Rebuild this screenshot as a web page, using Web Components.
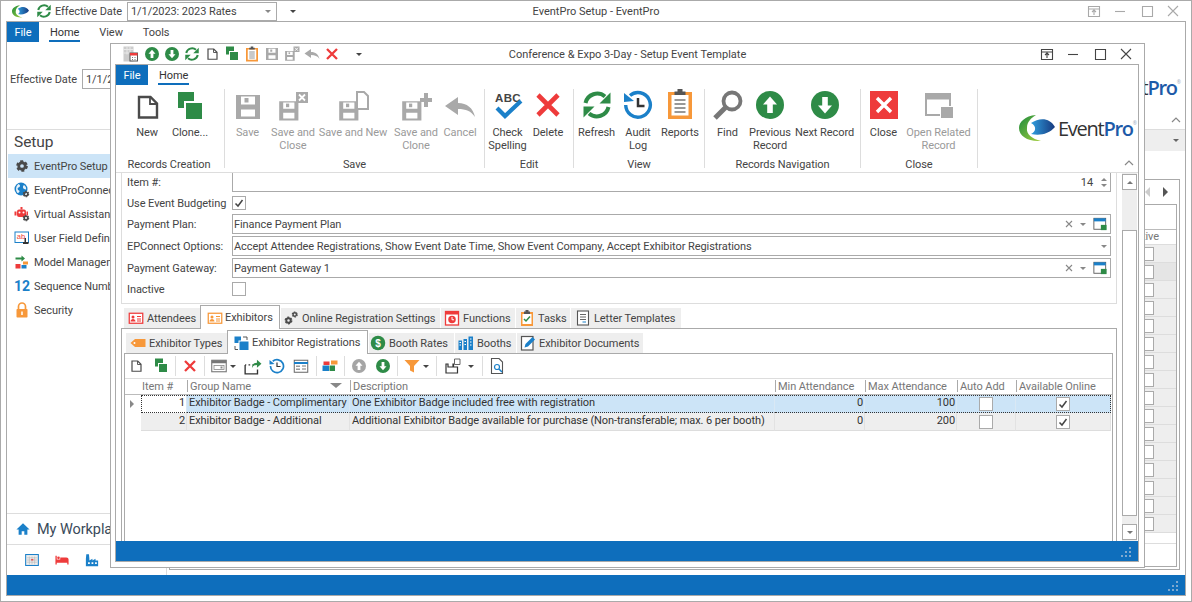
<!DOCTYPE html>
<html>
<head>
<meta charset="utf-8">
<title>EventPro</title>
<style>
  html, body { margin: 0; padding: 0; background: #fff; }
  body { font: 11px/13px Roboto, "Liberation Sans", sans-serif; letter-spacing: -.07px; color: #444; width: 1192px; height: 602px; overflow: hidden; position: relative; }
</style>
</head>
<body>

<ep-window id="main" title="EventPro Setup - EventPro" inactive style="width:1192px;height:602px;--bar:20px">
  <ep-toolbar slot="qat" style="gap:0;padding-left:11px">
    <ep-swirl style="width:17px;height:13px"></ep-swirl>
    <ep-icon name="refresh" size="16" style="margin-left:7px"></ep-icon>
    <span style="margin-left:3px;width:72px">Effective Date</span>
    <ep-combo style="width:150px;height:19px;--arrow:4px">1/1/2023: 2023 Rates</ep-combo>
    <ep-caret style="margin-left:13px"></ep-caret>
  </ep-toolbar>
  <ep-ribbon>
    <ep-ribbon-tab slot="tabs" active style="margin-left:10px">Home</ep-ribbon-tab>
    <ep-ribbon-tab slot="tabs" style="margin-left:18px">View</ep-ribbon-tab>
    <ep-ribbon-tab slot="tabs" style="margin-left:18px">Tools</ep-ribbon-tab>
    <div style="display:flex;align-items:center;height:66px;padding-left:3px;gap:0">
      <span style="width:72px">Effective Date</span>
      <ep-combo style="width:32px;height:20px;--arrow:0">1/1/2023: 2023 Rates</ep-combo>
    </div>
    <ep-logo slot="logo" style="margin:0 4px 1px 0"></ep-logo>
  </ep-ribbon>
  <ep-setup-body></ep-setup-body>
</ep-window>

<ep-window id="dialog" title="Conference &amp; Expo 3-Day - Setup Event Template" style="--pad-l:4px">
  <ep-toolbar slot="qat" style="gap:4px;padding-left:11px">
    <ep-icon name="qat-doc" size="16" style="margin-right:2px"></ep-icon>
    <ep-icon name="up" size="16"></ep-icon>
    <ep-icon name="down" size="16"></ep-icon>
    <ep-icon name="refresh" size="16"></ep-icon>
    <ep-icon name="new" size="16"></ep-icon>
    <ep-icon name="clone" size="16"></ep-icon>
    <ep-icon name="reports" size="16"></ep-icon>
    <ep-icon name="save" size="16"></ep-icon>
    <ep-icon name="save-close" size="16"></ep-icon>
    <ep-icon name="cancel" size="16"></ep-icon>
    <ep-icon name="delete" size="16"></ep-icon>
    <ep-caret style="margin-left:12px"></ep-caret>
  </ep-toolbar>

  <ep-ribbon>
    <ep-ribbon-tab slot="tabs" active style="margin-left:10px">Home</ep-ribbon-tab>

    <ep-ribbon-group label="Records Creation" style="padding:0 12px 0 10px">
      <ep-ribbon-button w="42" icon="new">New</ep-ribbon-button>
      <ep-ribbon-button w="44" icon="clone">Clone...</ep-ribbon-button>
    </ep-ribbon-group>
    <ep-ribbon-group label="Save" style="--pr:6px">
      <ep-ribbon-button w="45" icon="save" disabled>Save</ep-ribbon-button>
      <ep-ribbon-button w="46" icon="save-close" disabled>Save and<br>Close</ep-ribbon-button>
      <ep-ribbon-button w="74" icon="save-new" disabled>Save and New</ep-ribbon-button>
      <ep-ribbon-button w="52" icon="save-clone" disabled>Save and<br>Clone</ep-ribbon-button>
      <ep-ribbon-button w="36" icon="cancel" disabled>Cancel</ep-ribbon-button>
    </ep-ribbon-group>
    <ep-ribbon-group label="Edit" style="--pr:7px">
      <ep-ribbon-button w="45" icon="spell">Check<br>Spelling</ep-ribbon-button>
      <ep-ribbon-button w="36" icon="delete" dy="2">Delete</ep-ribbon-button>
    </ep-ribbon-group>
    <ep-ribbon-group label="View" style="--pr:1px">
      <ep-ribbon-button w="45" icon="refresh" dy="2">Refresh</ep-ribbon-button>
      <ep-ribbon-button w="38" icon="audit" dy="2">Audit<br>Log</ep-ribbon-button>
      <ep-ribbon-button w="46" icon="reports" dy="3">Reports</ep-ribbon-button>
    </ep-ribbon-group>
    <ep-ribbon-group label="Records Navigation" style="--pr:1px">
      <ep-ribbon-button w="45" icon="find" dy="2">Find</ep-ribbon-button>
      <ep-ribbon-button w="40" icon="up" dy="2">Previous<br>Record</ep-ribbon-button>
      <ep-ribbon-button w="69" icon="down" dy="2">Next Record</ep-ribbon-button>
    </ep-ribbon-group>
    <ep-ribbon-group label="Close" style="--pr:6px">
      <ep-ribbon-button w="45" icon="close-box" dy="2">Close</ep-ribbon-button>
      <ep-ribbon-button w="65" icon="related" dy="1">Open Related<br>Record</ep-ribbon-button>
    </ep-ribbon-group>

    <ep-logo slot="logo" style="margin:0 1px 4px 0"></ep-logo>
  </ep-ribbon>

  <ep-template-body></ep-template-body>
</ep-window>

<script>
const G = '#2e8b47', B = '#1b80c9', R = '#ee3b3b', O = '#f7983a', D = '#555', L = '#a9a9a9';

const floppy = (c = L) => `<path fill="${c}" fill-rule="evenodd" d="M4 4h24v24H4z M9 5.5v8h14v-8z M9 18.5v7h14v-7z"/><rect x="12.5" y="7" width="4" height="4.5" fill="${c}"/>`;
const smallFloppy = (c = L) => `<g transform="translate(-1 7) scale(.8)">${floppy(c)}</g>`;
const cardIcon = c => `<rect x="2.5" y="6.5" width="27" height="20" fill="#fff" stroke="${c}" stroke-width="2.5"/><circle cx="10" cy="14" r="3" fill="${c}"/><path d="M5 23c0-7 10-7 10 0z" fill="${c}"/><path d="M18 13h8M18 18h8M18 22h8" stroke="${c}" stroke-width="2"/>`;
const gearPath = (cx, cy, r, c) => `<circle cx="${cx}" cy="${cy}" r="${r}" fill="none" stroke="${c}" stroke-width="${r * .85}"/><circle cx="${cx}" cy="${cy}" r="${r * 1.5}" fill="none" stroke="${c}" stroke-width="${r * .6}" stroke-dasharray="${r * .9} ${r * .68}"/>`;

const ICONS = {
  new: `<path d="M8 6h11.5l6.5 6.5V26.5H8z" fill="#fff" stroke="#4a4a4a" stroke-width="2.4"/><path d="M19 6v7h7" fill="none" stroke="#4a4a4a" stroke-width="1.8"/>`,
  clone: `<rect x="4" y="1" width="16" height="16" fill="${G}"/><rect x="10" y="10" width="20" height="20" fill="#fff"/><rect x="12" y="12" width="16" height="16" fill="${G}"/>`,
  save: floppy(),
  'save-close': `${smallFloppy()}<rect x="19" y="1" width="12" height="11" fill="${L}"/><path d="M22 3.5l6 6M28 3.5l-6 6" stroke="#fff" stroke-width="1.8"/>`,
  'save-new': `${smallFloppy()}<path d="M20 1h7l4 4v13H20z" fill="#fff" stroke="${L}" stroke-width="2"/>`,
  'save-clone': `${smallFloppy()}<path d="M20 7h4V2h4v5h4v4h-4v5h-4v-5h-4z" fill="${L}"/>`,
  cancel: `<path fill="${L}" d="M1 15L14 6v6c9 0 15 5 17 14-4-6-9-8-17-8v6z"/>`,
  spell: `<text x="16" y="11" text-anchor="middle" font-family="Liberation Sans, sans-serif" font-weight="700" font-size="11.5" letter-spacing=".3" fill="#444">ABC</text><path d="M5 17l8 8L29 10" fill="none" stroke="${B}" stroke-width="4.2"/>`,
  delete: `<path d="M6 6l20 20M26 6L6 26" stroke="${R}" stroke-width="4.6"/>`,
  refresh: `<path d="M4.5 14A12 12 0 0 1 24 7.5" fill="none" stroke="${G}" stroke-width="4"/><path d="M29.5 3.5v11h-11z" fill="${G}"/><path d="M27.5 18A12 12 0 0 1 8 24.5" fill="none" stroke="${G}" stroke-width="4"/><path d="M2.5 28.5v-11h11z" fill="${G}"/>`,
  audit: `<path d="M8 6.5A12.3 12.3 0 1 1 3.7 16" fill="none" stroke="${B}" stroke-width="3.4"/><path d="M2 4l0 9 10-1z" fill="${B}"/><path d="M16 9v8h6.5" fill="none" stroke="#333" stroke-width="2.5"/>`,
  reports: `<rect x="4" y="4" width="24" height="27" fill="${O}"/><rect x="7.5" y="7" width="17" height="20.5" fill="#fff"/><path d="M10.5 7V3.5h3V1h5v2.5h3V7z" fill="#555"/><path d="M10.5 12h11M10.5 16h11M10.5 20h11M10.5 24h11" stroke="#777" stroke-width="1.6"/>`,
  tasks: `<rect x="4" y="4" width="24" height="28" fill="${O}"/><rect x="7" y="8" width="18" height="20" fill="#fff"/><path d="M10 8V3h3V0h6v3h3v5z" fill="#555"/><path d="M10 18l4 4 8-9" fill="none" stroke="${G}" stroke-width="3"/>`,
  find: `<circle cx="20" cy="12" r="8.5" fill="#fff" stroke="#777" stroke-width="3.8"/><path d="M14 18L3 29" stroke="#777" stroke-width="5"/>`,
  up: `<circle cx="16" cy="16" r="14" fill="${G}"/><path d="M16 7.5l7 8h-4.2v8.5h-5.6v-8.5H9z" fill="#fff"/>`,
  down: `<circle cx="16" cy="16" r="14" fill="${G}"/><path d="M16 24.5l7-8h-4.2V8h-5.6v8.5H9z" fill="#fff"/>`,
  'up-gray': `<circle cx="16" cy="16" r="14" fill="#a5a5a5"/><path d="M16 7.5l7 8h-4.2v8.5h-5.6v-8.5H9z" fill="#fff"/>`,
  'close-box': `<rect x="2" y="2" width="28" height="28" fill="${R}"/><path d="M9 9l14 14M23 9L9 23" stroke="#fff" stroke-width="3.4"/>`,
  related: `<path d="M2 3h26v6.5H2z" fill="${L}"/><path d="M3 9v16h14" fill="none" stroke="${L}" stroke-width="2"/><path d="M27 9v7" stroke="${L}" stroke-width="2"/><rect x="18" y="17" width="12" height="11" fill="${L}"/>`,
  gear: gearPath(16, 16, 6.5, '#4a4a4a'),
  gears: `${gearPath(11, 21, 4.4, '#4a4a4a')}${gearPath(23.5, 9, 3.4, '#4a4a4a')}`,
  globe: `<circle cx="14" cy="14" r="13" fill="${B}"/><path d="M9 4c5 2 3 6 0 7s-2 5 1 6-1 6-3 5C3 18 3 8 9 4z M20 6c3 2 5 6 4 9-3 0-7-2-6-5 0-2 1-3 2-4z" fill="#fff" opacity=".9"/>${gearPath(24, 24, 3.6, '#4a4a4a')}`,
  robot: `<rect x="6" y="7" width="18" height="15" rx="4" fill="${R}"/><rect x="1" y="11" width="4" height="8" fill="${R}"/><rect x="25" y="11" width="3" height="8" fill="${R}"/><rect x="13" y="2" width="4" height="5" fill="${R}"/><circle cx="11" cy="13" r="2" fill="#fff"/><circle cx="19" cy="13" r="2" fill="#fff"/>${gearPath(24, 24, 3.6, '#4a4a4a')}`,
  field: `<rect x="2" y="4" width="27" height="21" fill="#fff" stroke="${B}" stroke-width="2"/><text x="14" y="18" text-anchor="middle" font-family="Liberation Sans, sans-serif" font-size="15" fill="${R}">ab</text><path d="M21 16h3v8h5v4H18v-4h3z" fill="#333"/>`,
  model: `<path d="M3 7h12v-4l7 6-7 6v-4H3z" fill="${G}"/><rect x="3" y="20" width="10" height="9" fill="${R}"/><rect x="15" y="22" width="10" height="7" fill="${B}"/><rect x="18" y="15" width="10" height="6" fill="${O}"/>`,
  seq: `<text x="16" y="26" text-anchor="middle" font-family="Roboto, sans-serif" font-weight="700" font-size="28" fill="${B}">12</text>`,
  lock: `<path d="M9 15V9a7 7 0 0 1 14 0v6" fill="none" stroke="${O}" stroke-width="3.4"/><rect x="5" y="14" width="22" height="17" rx="1.5" fill="${O}"/><rect x="14.5" y="19" width="3" height="7" fill="#fff"/>`,
  home: `<path d="M16 3L1 17h5v12h7v-8h6v8h7V17h5z" fill="${B}"/>`,
  calendar: `<rect x="1.5" y="3.5" width="29" height="25" fill="#eee" stroke="${B}" stroke-width="2.4"/><path d="M4 11h24M4 16h24M4 21h24M10 8v18M16 8v18M22 8v18" stroke="#bbb" stroke-width="1.5"/><rect x="14" y="14" width="5" height="3" fill="${R}"/>`,
  bed: `<path d="M1 6h3v9h8V10h14a5 5 0 0 1 5 5v11h-3v-4H4v4H1z" fill="${R}"/><circle cx="8" cy="11" r="3" fill="${R}"/>`,
  factory: `<path d="M2 30V13l1-10h6l1 10v4l7-4v4l7-4v4h6v13z" fill="${B}"/><path d="M7 21h4v4H7zM15 21h4v4h-4zM23 21h4v4h-4z" fill="#fff"/>`,
  'card-red': cardIcon(R),
  'card-orange': cardIcon(O),
  clock: `<rect x="3" y="3" width="26" height="27" fill="#fff" stroke="${R}" stroke-width="2.6"/><rect x="3" y="3" width="26" height="6" fill="${R}"/><circle cx="16" cy="19" r="7.5" fill="${R}"/><path d="M16 14v5.5h4" fill="none" stroke="#fff" stroke-width="2"/>`,
  letter: `<rect x="5" y="2" width="22" height="28" fill="#fff" stroke="#555" stroke-width="2.2"/><path d="M10 9h12M10 14h12M10 19h12" stroke="#555" stroke-width="1.8"/><path d="M15 24h7" stroke="${B}" stroke-width="2"/>`,
  tag: `<path d="M1 16l9-8h21v16H10z" fill="${O}"/><circle cx="9" cy="16" r="2" fill="#fff"/>`,
  registrations: `<rect x="1" y="3" width="13" height="13" fill="${B}"/><rect x="9" y="11" width="20" height="19" fill="#fff"/><rect x="11" y="13" width="18" height="17" fill="${B}"/><path d="M18 4h8v6M2 22v7h6" fill="none" stroke="#444" stroke-width="1.8"/>`,
  dollar: `<circle cx="16" cy="16" r="14.5" fill="${G}"/><text x="16" y="23" text-anchor="middle" font-family="Liberation Sans, sans-serif" font-weight="700" font-size="20" fill="#fff">$</text>`,
  booths: `<path d="M1 11h7v19H1zM11 8h7v22h-7zM21 3h9v27h-9z" fill="${B}"/><path d="M3 15h3M3 20h3M13 13h3M13 19h3M24 8h3M24 14h3M24 20h3" stroke="#fff" stroke-width="2"/>`,
  docedit: `<rect x="3" y="3" width="23" height="27" fill="#fff" stroke="#555" stroke-width="2.4"/><path d="M9 25l2-7L25 4l5 5-14 14z" fill="${B}"/>`,
  layout: `<rect x="1.5" y="4.5" width="29" height="23" fill="#fff" stroke="#777" stroke-width="2.2"/><rect x="1.5" y="4.5" width="29" height="6" fill="#777"/><rect x="6" y="15" width="20" height="8" fill="none" stroke="#888" stroke-width="1.6"/><rect x="19" y="17" width="4" height="4" fill="#888"/>`,
  export: `<path d="M2 14h2M8 14h3M15 14h2M2 14v16h22V22" fill="none" stroke="#333" stroke-width="2.4"/><path d="M14 20c0-7 4-10 9-10V5l8 7-8 7v-5c-4 0-7 1-9 6z" fill="${G}"/>`,
  history: `<path d="M7.5 6.5A13 13 0 1 1 3 16" fill="none" stroke="${B}" stroke-width="3.4"/><path d="M1 4v9l10-1z" fill="${B}"/><path d="M16 9v8h7" fill="none" stroke="#333" stroke-width="2.4"/>`,
  form: `<rect x="2.5" y="4.5" width="27" height="24" fill="#fff" stroke="#666" stroke-width="2"/><path d="M2 10h28" stroke="${B}" stroke-width="4"/><rect x="6" y="15" width="8" height="3" fill="#999"/><rect x="6" y="21" width="8" height="3" fill="#999"/><path d="M18 16h8M18 22h8" stroke="#777" stroke-width="2"/>`,
  colors: `<rect x="1" y="15" width="13" height="11" fill="${B}"/><rect x="15" y="15" width="11" height="11" fill="${G}"/><rect x="3" y="7" width="12" height="7" fill="${R}"/><rect x="18" y="5" width="13" height="8" fill="${O}"/>`,
  funnel: `<path d="M1 4h30L20 16v13l-8-4V16z" fill="${O}"/>`,
  columns: `<path d="M2 12h4v6h10V12h1v6h8v12H2z" fill="#fff" stroke="#333" stroke-width="2.4"/><path d="M19 2h11v11H19z" fill="#fff" stroke="#555" stroke-width="1.8"/>`,
  preview: `<path d="M5 1h15l7 7v23H5z" fill="#fff" stroke="#555" stroke-width="2.2"/><circle cx="16" cy="18" r="5" fill="#fff" stroke="${B}" stroke-width="2.4"/><path d="M20 22l6 6" stroke="${B}" stroke-width="3"/>`,
  'qat-doc': `<rect x="3" y="1" width="20" height="30" fill="#ccc"/><path d="M3 7h20M3 14h20M10 1v16M16 1v16" stroke="#e8e8e8" stroke-width="2"/><rect x="16" y="14" width="15" height="16" fill="#fff" stroke="#555" stroke-width="2"/><rect x="16" y="14" width="15" height="5" fill="${R}"/><path d="M20 23h2M25 23h2M20 27h2M25 27h2" stroke="#555" stroke-width="1.6"/>`,
  lookup: `<rect x="2" y="3" width="27" height="25" fill="#fff" stroke="#555" stroke-width="2"/><rect x="2" y="3" width="27" height="7" fill="${B}"/><rect x="18" y="18" width="13" height="12" fill="${G}"/>`,
};

class EpIcon extends HTMLElement {
  constructor() {
    super();
    this.attachShadow({mode: 'open'});
  }
  connectedCallback() {
    const s = this.getAttribute('size') || 32;
    this.shadowRoot.innerHTML = `
    <style>
      :host { display: inline-flex; flex: none; width: ${s}px; height: ${s}px; }
      svg { display: block; width: 100%; height: 100%; }
    </style>
    <svg viewBox="0 0 32 32">${ICONS[this.getAttribute('name')] || ''}</svg>`;
  }
}

class EpCaret extends HTMLElement {
  constructor() {
    super();
    this.attachShadow({mode: 'open'});
    this.shadowRoot.innerHTML = `
    <style>
      :host { display: inline-block; flex: none; width: 0; height: 0; border: 3px solid transparent; border-top: 3px solid var(--caret, #444); border-bottom: 0; }
    </style>`;
  }
}

class EpSep extends HTMLElement {
  constructor() {
    super();
    this.attachShadow({mode: 'open'});
    this.shadowRoot.innerHTML = `<style>:host { display: block; flex: none; width: 1px; height: 20px; background: #ddd; }</style>`;
  }
}

class EpToolbar extends HTMLElement {
  constructor() {
    super();
    this.attachShadow({mode: 'open'});
    this.shadowRoot.innerHTML = `
    <style>:host { display: flex; align-items: center; height: 100%; }</style>
    <slot></slot>`;
  }
}

class EpSwirl extends HTMLElement {
  constructor() {
    super();
    this.attachShadow({mode: 'open'});
    this.shadowRoot.innerHTML = `
    <style>:host { display: block; flex: none; } svg { display: block; width: 100%; height: 100%; }</style>
    <svg viewBox="0 0 36 27">
      <defs>
        <linearGradient id="g" x1="0" x2="1" y1="0" y2="1"><stop offset="0" stop-color="#1b8a3d"/><stop offset="1" stop-color="#a4cf3c"/></linearGradient>
        <linearGradient id="b" x1="0" x2="1"><stop offset="0" stop-color="#2f9ede"/><stop offset="1" stop-color="#17397f"/></linearGradient>
      </defs>
      <path fill="url(#g)" d="M17 0C6 1 0 7 0 13c0 8 9 14 22 13-9-2-15-7-14-13C8 7 12 3 17 0z"/>
      <path fill="url(#b)" d="M12 8c9-6 19-5 24 4-6 7-15 9-24 7 5-2 6-8 0-11z"/>
    </svg>`;
  }
}

class EpLogo extends HTMLElement {
  constructor() {
    super();
    this.attachShadow({mode: 'open'});
    this.shadowRoot.innerHTML = `
    <style>
      :host { display: flex; align-items: center; gap: 3px; flex: none; }
      ep-swirl { width: 36px; height: 27px; }
      span { font: 20px/27px "Open Sans", sans-serif; letter-spacing: -1.25px; color: #333; }
      b { font-weight: 600; color: #1d5aa8; }
      sup { font-size: 5px; line-height: 0; vertical-align: 11px; color: #9ab; letter-spacing: 0; }
    </style>
    <ep-swirl></ep-swirl><span>Event<b>Pro</b><sup>®</sup></span>`;
  }
}

class EpWindow extends HTMLElement {
  constructor() {
    super();
    this.attachShadow({mode: 'open'});
  }
  connectedCallback() {
    const fg = this.hasAttribute('inactive') ? '#a9a9a9' : '#444';
    this.shadowRoot.innerHTML = `
    <style>
      :host { display: flex; flex-direction: column; box-sizing: border-box; border: 1px solid #aaa; background: #fff; padding: 0 5px 5px var(--pad-l, 5px); }
      .bar { display: grid; grid-template-columns: 1fr auto 1fr; align-items: center; flex: none; height: var(--bar, 20px); margin: 0 -5px 0 calc(var(--pad-l, 5px) * -1); }
      .title { color: #444; letter-spacing: 0; }
      .ctl { display: flex; justify-content: flex-end; align-items: center; gap: 12.3px; padding-right: 11px; }
      .ctl svg { display: block; width: 14px; height: 14px; fill: none; stroke: ${fg}; stroke-width: 1.1; }
      .frame { flex: 1; min-height: 0; display: flex; flex-direction: column; border: 1px solid #aaa; overflow: hidden; }
    </style>
    <div class="bar">
      <div><slot name="qat"></slot></div>
      <div class="title">${this.getAttribute('title')}</div>
      <div class="ctl">
        <svg viewBox="0 0 14 14"><path d="M1.5 2.5h11v10h-11zM1.5 5h11M7 11V6.5M5 8l2-2 2 2"/></svg>
        <svg viewBox="0 0 14 14"><path d="M2 7.5h10"/></svg>
        <svg viewBox="0 0 14 14"><path d="M2.5 2.5h10v10h-10z"/></svg>
        <svg viewBox="0 0 14 14"><path d="M2 2l10 10M12 2L2 12"/></svg>
      </div>
    </div>
    <div class="frame"><slot></slot></div>`;
  }
}

class EpRibbon extends HTMLElement {
  constructor() {
    super();
    this.attachShadow({mode: 'open'});
    this.shadowRoot.innerHTML = `
    <style>
      :host { display: block; flex: none; position: relative; border-bottom: 1px solid #ddd; }
      .tabs { display: flex; height: 21px; }
      .file { width: 32px; height: 20px; background: #0e6ebc; color: #fff; text-align: center; line-height: 22px; }
      .body { display: flex; align-items: flex-start; height: 86px; box-sizing: border-box; padding-top: 3px; }
      .groups { display: flex; flex: 1; min-width: 0; }
      .logo { align-self: center; display: flex; }
      .chev { position: absolute; right: 4px; bottom: 6px; width: 10px; height: 6px; fill: none; stroke: #888; stroke-width: 1.2; }
    </style>
    <div class="tabs"><div class="file">File</div><slot name="tabs"></slot></div>
    <div class="body">
      <div class="groups"><slot></slot></div>
      <div class="logo"><slot name="logo"></slot></div>
    </div>
    <svg class="chev" viewBox="0 0 10 6"><path d="M1 5l4-4 4 4"/></svg>`;
  }
}

class EpRibbonTab extends HTMLElement {
  constructor() {
    super();
    this.attachShadow({mode: 'open'});
    this.shadowRoot.innerHTML = `
    <style>
      :host { display: block; height: 20px; box-sizing: border-box; line-height: 21px; padding: 0 1px; }
      :host([active]) { border-bottom: 2px solid #0e6ebc; color: #333; }
    </style>
    <slot></slot>`;
  }
}

class EpRibbonGroup extends HTMLElement {
  constructor() {
    super();
    this.attachShadow({mode: 'open'});
  }
  connectedCallback() {
    this.shadowRoot.innerHTML = `
    <style>
      :host { display: flex; flex-direction: column; flex: none; height: 79px; box-sizing: content-box; border-right: 1px solid #ddd; }
      .btns { display: flex; flex: 1; padding-right: var(--pr, 0); }
      .label { text-align: center; height: 10px; line-height: 13px; }
    </style>
    <div class="btns"><slot></slot></div>
    <div class="label">${this.getAttribute('label')}</div>`;
  }
}

class EpRibbonButton extends HTMLElement {
  constructor() {
    super();
    this.attachShadow({mode: 'open'});
  }
  connectedCallback() {
    const dy = +this.getAttribute('dy') || 0;
    const dim = this.getAttribute('icon') === 'related' || this.hasAttribute('disabled');
    this.shadowRoot.innerHTML = `
    <style>
      :host { display: flex; flex-direction: column; align-items: center; flex: none; width: ${this.getAttribute('w')}px; text-align: center; white-space: nowrap; padding-top: 2px; ${dim ? 'color: #9a9a9a;' : ''} }
      ep-icon { margin-top: ${-dy}px; margin-bottom: ${3 + dy}px; }
    </style>
    <ep-icon name="${this.getAttribute('icon')}" size="32"></ep-icon>
    <div><slot></slot></div>`;
  }
}

class EpCombo extends HTMLElement {
  constructor() {
    super();
    this.attachShadow({mode: 'open'});
    this.shadowRoot.innerHTML = `
    <style>
      :host { display: flex; align-items: center; flex: none; box-sizing: border-box; border: 1px solid #aaa; padding: 0 1px 0 1px; background: #fff; color: #444; overflow: hidden; white-space: nowrap; }
      .txt { flex: 1; padding-left: 2px; }
      .tools { display: flex; align-items: center; gap: 5px; padding-right: var(--arrow, 4px); --caret: #888; }
    </style>
    <div class="txt"><slot></slot></div>
    <div class="tools"><slot name="tools"></slot><ep-caret></ep-caret></div>`;
  }
}

class EpCheck extends HTMLElement {
  constructor() {
    super();
    this.attachShadow({mode: 'open'});
    this.shadowRoot.innerHTML = `
    <style>
      :host { display: block; flex: none; box-sizing: border-box; width: 14px; height: 14px; border: 1px solid #aaa; background: #fff; }
      svg { display: none; width: 12px; height: 12px; fill: none; stroke: #444; stroke-width: 1.5; }
      :host([checked]) svg { display: block; }
    </style>
    <svg viewBox="0 0 12 12"><path d="M2.5 6.5l2.5 2.5 4.5-6"/></svg>`;
  }
}

class EpFormRow extends HTMLElement {
  constructor() {
    super();
    this.attachShadow({mode: 'open'});
  }
  connectedCallback() {
    this.shadowRoot.innerHTML = `
    <style>
      :host { display: grid; grid-template-columns: 110px 1fr; align-items: center; box-sizing: border-box; padding: 0 5px var(--pb, 0) 0; height: var(--h, 22px); }
      .lbl { padding-left: 5px; white-space: nowrap; }
      .val { display: flex; align-items: center; }
    </style>
    <div class="lbl">${this.getAttribute('label')}</div>
    <div class="val"><slot></slot></div>`;
  }
}

class EpTabs extends HTMLElement {
  constructor() {
    super();
    this.attachShadow({mode: 'open'});
    this.shadowRoot.innerHTML = `
    <style>
      :host { display: flex; flex-direction: column; flex: 1; min-height: 0; }
      .strip { display: flex; align-items: flex-end; gap: 1px; height: 22px; flex: none; padding-left: var(--strip-pad, 3px); position: relative; z-index: 1; }
      .frame { flex: 1; min-height: 0; display: flex; flex-direction: column; border: 1px solid #aaa; border-bottom: 0; padding: var(--frame-pad, 0); }
    </style>
    <div class="strip"><slot name="tab"></slot></div>
    <div class="frame"><slot></slot></div>`;
  }
}

class EpTab extends HTMLElement {
  constructor() {
    super();
    this.attachShadow({mode: 'open'});
  }
  connectedCallback() {
    this.shadowRoot.innerHTML = `
    <style>
      :host { display: flex; align-items: center; gap: 3px; flex: none; box-sizing: border-box; width: ${this.getAttribute('w')}px; height: 20px; padding-left: 4px; background: #eee; white-space: nowrap; }
      :host([active]) { height: 24px; margin-bottom: -1px; background: #fff; border: 1px solid #aaa; border-bottom: 0; padding-left: 6px; margin-left: -1px; gap: 2px; }
    </style>
    <ep-icon name="${this.getAttribute('icon')}" size="16"></ep-icon>
    <div><slot></slot></div>`;
  }
}

class EpScrollbar extends HTMLElement {
  constructor() {
    super();
    this.attachShadow({mode: 'open'});
    this.shadowRoot.innerHTML = `
    <style>
      :host { display: flex; flex-direction: column; flex: none; width: 15px; margin-right: 1px; background: #eee; padding-top: 1px; padding-bottom: 1px; box-sizing: border-box; --caret: #777; }
      .b { flex: none; height: 16px; box-sizing: border-box; border: 1px solid #aaa; background: #fff; display: flex; align-items: center; justify-content: center; }
      .up ep-caret { transform: rotate(180deg); }
      .thumb { flex: 1; box-sizing: border-box; border: 1px solid #aaa; background: #fff; margin: 40px 0 8px; }
    </style>
    <div class="b up"><ep-caret></ep-caret></div>
    <div class="thumb"></div>
    <div class="b"><ep-caret></ep-caret></div>`;
  }
}

class EpStatusBar extends HTMLElement {
  constructor() {
    super();
    this.attachShadow({mode: 'open'});
    this.shadowRoot.innerHTML = `
    <style>
      :host { display: flex; justify-content: flex-end; align-items: flex-end; flex: none; height: 20px; background: #0e6ebc; padding: 0 6px 3px 0; box-sizing: border-box; }
      svg { display: block; width: 11px; height: 11px; fill: #7fa9d0; }
    </style>
    <svg viewBox="0 0 11 11"><path d="M8 0h2v2H8zM4 4h2v2H4zM8 4h2v2H8zM0 8h2v2H0zM4 8h2v2H4zM8 8h2v2H8z"/></svg>`;
  }
}

class EpGrid extends HTMLElement {
  constructor() {
    super();
    this.attachShadow({mode: 'open'});
    const cols = ['Item #', 'Group Name', 'Description', 'Min Attendance', 'Max Attendance', 'Auto Add', 'Available Online'];
    const rows = [
      ['1', 'Exhibitor Badge - Complimentary', 'One Exhibitor Badge included free with registration', '0', '100', false, true],
      ['2', 'Exhibitor Badge - Additional', 'Additional Exhibitor Badge available for purchase (Non-transferable; max. 6 per booth)', '0', '200', false, true],
    ];
    const tpl = '16px 46px 163px 425px 90px 92px 59px 95px';
    const rowHtml = (r, i) => `
      <div class="row ${i === 0 ? 'sel' : ''}">
        <div class="ind">${i === 0 ? '<i></i>' : ''}</div>
        <div class="c num first">${r[0]}</div>
        <div class="c">${r[1]}</div>
        <div class="c">${r[2]}</div>
        <div class="c num">${r[3]}</div>
        <div class="c num">${r[4]}</div>
        <div class="c chk"><ep-check ${r[5] ? 'checked' : ''}></ep-check></div>
        <div class="c chk"><ep-check ${r[6] ? 'checked' : ''}></ep-check></div>
      </div>`;
    this.shadowRoot.innerHTML = `
    <style>
      :host { display: block; flex: 1; white-space: nowrap; color: #333; }
      .head, .row { display: grid; grid-template-columns: ${tpl}; }
      .head { height: 15px; border-bottom: 1px solid #bbb; color: #777; box-sizing: content-box; }
      .head div { padding-left: 2px; border-left: 1px solid #aaa; position: relative; height: 12px; line-height: 14px; margin-top: 1px; }
      .head div:first-child { border-left: 0; }
      .head div:nth-child(2) { border-left: 0; padding-left: 1px; }
      .sort { position: absolute; right: 11px; top: 4px; --caret: #888; transform: scale(2, 1.7); }
      .row { height: 18px; line-height: 16px; }
      .c { padding: 0 1px 0 2px; background: #eee; border-right: 1px solid #e2e2e2; border-bottom: 1px solid #ddd; overflow: hidden; }
      .ind { position: relative; }
      .ind i { position: absolute; left: 5px; top: 5px; width: 0; height: 0; border: 4px solid transparent; border-left: 4px solid #888; border-right: 0; }
      .num { text-align: right; }
      .chk { display: flex; justify-content: center; align-items: center; padding: 0; }
      .sel .c { background: #cce4f7; border-top: 1px dotted #333; border-bottom: 1px dotted #333; border-right-color: #d9e8f4; line-height: 14px; }
      .sel .c:last-child { border-right: 1px dotted #333; }
      .sel .first { background: #fff; border-left: 1px dotted #333; }
    </style>
    <div class="head">
      <div></div>
      ${cols.map((c, i) => `<div>${c}${i === 1 ? '<ep-caret class="sort"></ep-caret>' : ''}</div>`).join('')}
    </div>
    ${rows.map(rowHtml).join('')}`;
  }
}

class EpTemplateBody extends HTMLElement {
  constructor() {
    super();
    this.attachShadow({mode: 'open'});
    this.shadowRoot.innerHTML = `
    <style>
      :host { display: flex; flex: 1; min-height: 0; flex-direction: column; }
      .main { display: flex; flex: 1; min-height: 0; }
      .col { flex: 1; min-width: 0; display: flex; flex-direction: column; padding: 0 5px; }
      .form { flex: none; border: 1px solid #ddd; border-top: 0; padding-bottom: 5px; margin-bottom: 2px; }
      .box { flex: 1; height: 20px; box-sizing: border-box; border: 1px solid #aaa; display: flex; align-items: center; padding: 0 3px 0 1px; white-space: nowrap; color: #444; }
      .box .t { flex: 1; }
      .item { height: 19px; border-top: 0; justify-content: flex-end; padding-right: 3px; }
      .spin { display: flex; flex-direction: column; gap: 3px; margin-left: 8px; --caret: #888; }
      .spin ep-caret:first-child { transform: rotate(180deg); }
      .tool { display: flex; align-items: center; gap: 7px; --caret: #888; }
      .sub { flex: 1; min-height: 0; display: flex; --strip-pad: 2px; margin-top: 2px; margin-right: 3px; margin-left: 2px; }
    </style>
    <div class="main">
      <div class="col">
        <div class="form">
          <ep-form-row label="Item #:" style="--h:19px"><div class="box item">14<span class="spin"><ep-caret></ep-caret><ep-caret></ep-caret></span></div></ep-form-row>
          <ep-form-row label="Use Event Budgeting"><ep-check checked></ep-check></ep-form-row>
          <ep-form-row label="Payment Plan:" style="--pb:2px"><div class="box"><span class="t">Finance Payment Plan</span><span class="tool">
            <svg width="8" height="8" viewBox="0 0 8 8"><path d="M1 1l6 6M7 1L1 7" stroke="#888" stroke-width="1.1"/></svg><ep-caret></ep-caret><ep-icon name="lookup" size="14"></ep-icon></span></div></ep-form-row>
          <ep-form-row label="EPConnect Options:" style="--pb:2px"><div class="box"><span class="t">Accept Attendee Registrations, Show Event Date Time, Show Event Company, Accept Exhibitor Registrations</span><ep-caret style="--caret:#888"></ep-caret></div></ep-form-row>
          <ep-form-row label="Payment Gateway:" style="--pb:2px"><div class="box"><span class="t">Payment Gateway 1</span><span class="tool">
            <svg width="8" height="8" viewBox="0 0 8 8"><path d="M1 1l6 6M7 1L1 7" stroke="#888" stroke-width="1.1"/></svg><ep-caret></ep-caret><ep-icon name="lookup" size="14"></ep-icon></span></div></ep-form-row>
          <ep-form-row label="Inactive" style="--h:18px"><ep-check></ep-check></ep-form-row>
        </div>

        <ep-tabs>
          <ep-tab slot="tab" w="76" icon="card-red">Attendees</ep-tab>
          <ep-tab slot="tab" w="80" icon="card-orange" active>Exhibitors</ep-tab>
          <ep-tab slot="tab" w="159" icon="gears" style="padding-left:2px">Online Registration Settings</ep-tab>
          <ep-tab slot="tab" w="74" icon="clock" style="padding-left:3px">Functions</ep-tab>
          <ep-tab slot="tab" w="54" icon="tasks" style="padding-left:3px">Tasks</ep-tab>
          <ep-tab slot="tab" w="110" icon="letter">Letter Templates</ep-tab>
          <div class="sub">
            <ep-tabs>
              <ep-tab slot="tab" w="101" icon="tag">Exhibitor Types</ep-tab>
              <ep-tab slot="tab" w="141" icon="registrations" active>Exhibitor Registrations</ep-tab>
              <ep-tab slot="tab" w="85" icon="dollar" style="padding-left:1px">Booth Rates</ep-tab>
              <ep-tab slot="tab" w="61" icon="booths" style="padding-left:3px">Booths</ep-tab>
              <ep-tab slot="tab" w="126" icon="docedit" style="padding-left:3px">Exhibitor Documents</ep-tab>

              <ep-toolbar style="height:24px;flex:none;border-bottom:1px solid #ddd;padding-left:3px">
                <ep-icon name="new" size="16"></ep-icon>
                <ep-icon name="clone" size="16" style="margin-left:9px"></ep-icon>
                <ep-sep style="margin-left:6px"></ep-sep>
                <ep-icon name="delete" size="16" style="margin-left:6px"></ep-icon>
                <ep-sep style="margin-left:6px"></ep-sep>
                <ep-icon name="layout" size="16" style="margin-left:6px"></ep-icon>
                <ep-caret style="margin-left:3px"></ep-caret>
                <ep-icon name="export" size="18" style="margin-left:8px"></ep-icon>
                <ep-icon name="history" size="16" style="margin-left:7px"></ep-icon>
                <ep-icon name="form" size="16" style="margin-left:8px"></ep-icon>
                <ep-sep style="margin-left:7px"></ep-sep>
                <ep-icon name="colors" size="16" style="margin-left:5px"></ep-icon>
                <ep-sep style="margin-left:6px"></ep-sep>
                <ep-icon name="up-gray" size="16" style="margin-left:6px"></ep-icon>
                <ep-icon name="down" size="16" style="margin-left:8px"></ep-icon>
                <ep-sep style="margin-left:6px"></ep-sep>
                <ep-icon name="funnel" size="16" style="margin-left:6px"></ep-icon>
                <ep-caret style="margin-left:3px"></ep-caret>
                <ep-sep style="margin-left:7px"></ep-sep>
                <ep-icon name="columns" size="16" style="margin-left:8px"></ep-icon>
                <ep-caret style="margin-left:7px"></ep-caret>
                <ep-sep style="margin-left:8px"></ep-sep>
                <ep-icon name="preview" size="16" style="margin-left:6px"></ep-icon>
              </ep-toolbar>
              <ep-grid></ep-grid>
            </ep-tabs>
          </div>
        </ep-tabs>
      </div>
      <ep-scrollbar></ep-scrollbar>
    </div>
    <ep-status-bar></ep-status-bar>`;
  }
}

class EpSetupBody extends HTMLElement {
  constructor() {
    super();
    this.attachShadow({mode: 'open'});
    const nav = [['gear', 'EventPro Setup'], ['globe', 'EventProConnect'], ['robot', 'Virtual Assistant'], ['field', 'User Field Definitions'], ['model', 'Model Management'], ['seq', 'Sequence Numbers'], ['lock', 'Security']];
    const rows = Array.from({length: 16}, (_, i) => `<div class="r ${i === 1 ? 'alt' : ''}"><ep-check></ep-check></div>`).join('');
    this.shadowRoot.innerHTML = `
    <style>
      :host { display: flex; flex-direction: column; flex: 1; min-height: 0; }
      .split { display: flex; flex: 1; min-height: 0; }
      .side { width: 160px; flex: none; box-sizing: border-box; border-right: 1px solid #ddd; display: flex; flex-direction: column; white-space: nowrap; overflow: hidden; }
      .h { height: 24px; font-size: 15.5px; line-height: 24px; padding-left: 7px; flex: none; }
      .n { height: 24px; display: flex; align-items: center; gap: 4px; padding-left: 6px; margin-left: 1px; flex: none; }
      .n.on { background: #cce4f7; }
      .sp { flex: 1; }
      .wp { height: 30px; flex: none; border-top: 1px solid #ddd; border-bottom: 1px solid #ddd; display: flex; align-items: center; gap: 7px; padding-left: 9px; font-size: 14.5px; color: #3a4a5a; }
      .ic { height: 30px; flex: none; display: flex; align-items: center; gap: 16px; padding-left: 18px; }
      .right { flex: 1; min-width: 0; display: flex; flex-direction: column; padding-left: 2px; }
      .band { height: 21px; flex: none; background: #eee; display: flex; justify-content: flex-end; align-items: center; padding-right: 6px; --caret: #666; margin-left: 1px; }
      .outer { margin: 28px 5px 5px 0; flex: 1; border: 1px solid #aaa; display: flex; flex-direction: column; padding: 0 2px 2px; box-sizing: border-box; }
      .nav { height: 24px; flex: none; display: flex; justify-content: flex-end; align-items: center; gap: 13px; padding-right: 9px; }
      .nav i { width: 0; height: 0; border: 5px solid transparent; }
      .nav .l { border-right: 5px solid #ccc; border-left: 0; }
      .nav .rr { border-left: 5px solid #555; border-right: 0; }
      .inner { flex: 1; border: 1px solid #aaa; display: flex; flex-direction: column; }
      .top { height: 24px; flex: none; border-bottom: 1px solid #bbb; }
      .hd { height: 14px; flex: none; border-bottom: 1px solid #ddd; text-align: right; padding-right: 17px; color: #777; line-height: 14px; }
      .r { height: 18px; box-sizing: border-box; flex: none; background: #eee; border-bottom: 1px solid #ddd; display: flex; justify-content: flex-end; align-items: center; padding-right: 22px; }
      .r.alt { background: #e5e5e5; }
      .end { height: 10px; flex: none; border-bottom: 1px solid #ddd; }
    </style>
    <div class="split">
      <div class="side">
        <div class="h">Setup</div>
        ${nav.map((n, i) => `<div class="n ${i === 0 ? 'on' : ''}"><ep-icon name="${n[0]}" size="16"></ep-icon>${n[1]}</div>`).join('')}
        <div class="sp"></div>
        <div class="wp"><ep-icon name="home" size="14"></ep-icon>My Workplace</div>
        <div class="ic"><ep-icon name="calendar" size="14"></ep-icon><ep-icon name="bed" size="14"></ep-icon><ep-icon name="factory" size="14"></ep-icon></div>
      </div>
      <div class="right">
        <div class="band"><ep-caret></ep-caret></div>
        <div class="outer">
          <div class="nav"><i class="l"></i><i class="rr"></i></div>
          <div class="inner">
            <div class="top"></div>
            <div class="hd">Inactive</div>
            ${rows}
            <div class="end"></div>
          </div>
        </div>
      </div>
    </div>
    <ep-status-bar></ep-status-bar>`;
  }
}

customElements.define('ep-icon', EpIcon);
customElements.define('ep-caret', EpCaret);
customElements.define('ep-sep', EpSep);
customElements.define('ep-toolbar', EpToolbar);
customElements.define('ep-swirl', EpSwirl);
customElements.define('ep-logo', EpLogo);
customElements.define('ep-window', EpWindow);
customElements.define('ep-ribbon', EpRibbon);
customElements.define('ep-ribbon-tab', EpRibbonTab);
customElements.define('ep-ribbon-group', EpRibbonGroup);
customElements.define('ep-ribbon-button', EpRibbonButton);
customElements.define('ep-combo', EpCombo);
customElements.define('ep-check', EpCheck);
customElements.define('ep-form-row', EpFormRow);
customElements.define('ep-tabs', EpTabs);
customElements.define('ep-tab', EpTab);
customElements.define('ep-scrollbar', EpScrollbar);
customElements.define('ep-status-bar', EpStatusBar);
customElements.define('ep-grid', EpGrid);
customElements.define('ep-template-body', EpTemplateBody);
customElements.define('ep-setup-body', EpSetupBody);

// the setup dialog floats over the main window, like a window on a desktop
const dlg = document.getElementById('dialog');
dlg.style.position = 'absolute';
dlg.style.left = '110px';
dlg.style.top = '43px';
dlg.style.width = '1035px';
dlg.style.height = '525px';
</script>
</body>
</html>
